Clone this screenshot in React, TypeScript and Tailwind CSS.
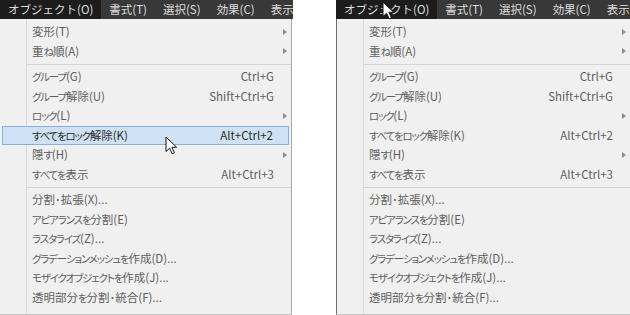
import React from 'react';

type Item =
  | { kind: 'sep' }
  | { kind: 'item'; label: string; shortcut?: string; sub?: boolean; id?: string };

const items: Item[] = [
  { kind: 'item', label: '変形(T)', sub: true },
  { kind: 'item', label: '重ね順(A)', sub: true },
  { kind: 'sep' },
  { kind: 'item', label: 'グループ(G)', shortcut: 'Ctrl+G' },
  { kind: 'item', label: 'グループ解除(U)', shortcut: 'Shift+Ctrl+G' },
  { kind: 'item', label: 'ロック(L)', sub: true },
  { kind: 'item', label: 'すべてをロック解除(K)', shortcut: 'Alt+Ctrl+2', id: 'unlock' },
  { kind: 'item', label: '隠す(H)', sub: true },
  { kind: 'item', label: 'すべてを表示', shortcut: 'Alt+Ctrl+3' },
  { kind: 'sep' },
  { kind: 'item', label: '分割･拡張(X)...' },
  { kind: 'item', label: 'アピアランスを分割(E)' },
  { kind: 'item', label: 'ラスタライズ(Z)...' },
  { kind: 'item', label: 'グラデーションメッシュを作成(D)...' },
  { kind: 'item', label: 'モザイクオブジェクトを作成(J)...' },
  { kind: 'item', label: '透明部分を分割･統合(F)...' },
];

const barItems = ['オブジェクト(O)', '書式(T)', '選択(S)', '効果(C)', '表示(V)'];

const font = { fontFamily: '"Noto Sans CJK JP", "Liberation Sans", sans-serif' };

const Label: React.FC<{ text: string }> = ({ text }) => (
  <>
    {text.split(/([\u3040-\u30ff]+)/).map((part, i) =>
      /^[\u3040-\u30ff]+$/.test(part) ? (
        <span key={i} className="text-[10.5px] tracking-[-1.2px]">
          {part}
        </span>
      ) : (
        <span key={i}>{part}</span>
      )
    )}
  </>
);

const Cursor: React.FC<{ className: string }> = ({ className }) => (
  <svg className={className} width="13" height="19" viewBox="0 0 13 19">
    <path
      d="M1 1 L1 15.5 L4.6 12.2 L7.2 17.8 L9.4 16.8 L6.9 11.3 L11.6 11.3 Z"
      fill="#fff"
      stroke="#111"
      strokeWidth="1"
      strokeLinejoin="round"
    />
  </svg>
);

const Panel: React.FC<{ hover: boolean; bordered: boolean; widthClass: string }> = ({ hover, bordered, widthClass }) => (
  <div className={`flex h-full shrink-0 flex-col overflow-hidden ${widthClass}`}>
    <div className="flex h-[19px] items-center overflow-hidden bg-[#383838] text-[11.5px] text-[#dedede]">
      {barItems.map((b, i) => (
        <div
          key={b}
          className={`flex h-full shrink-0 items-center whitespace-nowrap px-[8px] ${i === 0 ? 'bg-[#1c1c1c]' : ''}`}
        >
          {b}
        </div>
      ))}
    </div>
    <div
      className={`flex min-h-0 flex-1 border-b border-[#c4c4c4] bg-[#f0f0f0] ${
        bordered ? 'border-l border-l-[#6e6e6e]' : 'border-r border-r-[#a9a9a9] mr-[1px]'
      }`}
    >
      <div className="w-[27px] shrink-0 border-r border-[#d9d9d9]" />
      <div className="flex min-w-0 flex-1 flex-col pt-[3px] text-[11.5px] text-[#5e5e5e] [font-feature-settings:'palt']">
        {items.map((it, idx) => {
          if (it.kind === 'sep') {
            return (
              <div key={idx} className="flex h-[6px] items-center">
                <div className="h-[1px] w-full bg-[#d4d4d4]" />
              </div>
            );
          }
          const active = hover && it.id === 'unlock';
          return (
            <div
              key={idx}
              className={`flex h-[19.5px] items-center whitespace-nowrap ${
                active
                  ? 'relative -ml-[25px] mr-[2px] border border-[#86aede] bg-[#cfe2f5] pl-[29px] text-[#2a2a2a]'
                  : 'pl-[5px]'
              }`}
            >
              <span className="flex-1">
                <Label text={it.label} />
              </span>
              {it.shortcut && <span>{it.shortcut}</span>}
              <span className={`flex items-center justify-center ${active ? 'w-[15px]' : 'w-[17px]'}`}>
                {it.sub && (
                  <span className="ml-[5px] h-0 w-0 border-y-[3px] border-l-[4px] border-y-transparent border-l-[#8c8c8c]" />
                )}
              </span>
            </div>
          );
        })}
      </div>
    </div>
  </div>
);

export default function App() {
  return (
    <div className="relative flex h-[315px] w-[630px] gap-[43px] overflow-hidden bg-white" style={font}>
      <Panel hover bordered={false} widthClass="w-[293px]" />
      <Panel hover={false} bordered widthClass="w-[294px]" />
      <Cursor className="absolute left-[165px] top-[136px]" />
      <Cursor className="absolute left-[382px] top-[1px]" />
    </div>
  );
}
